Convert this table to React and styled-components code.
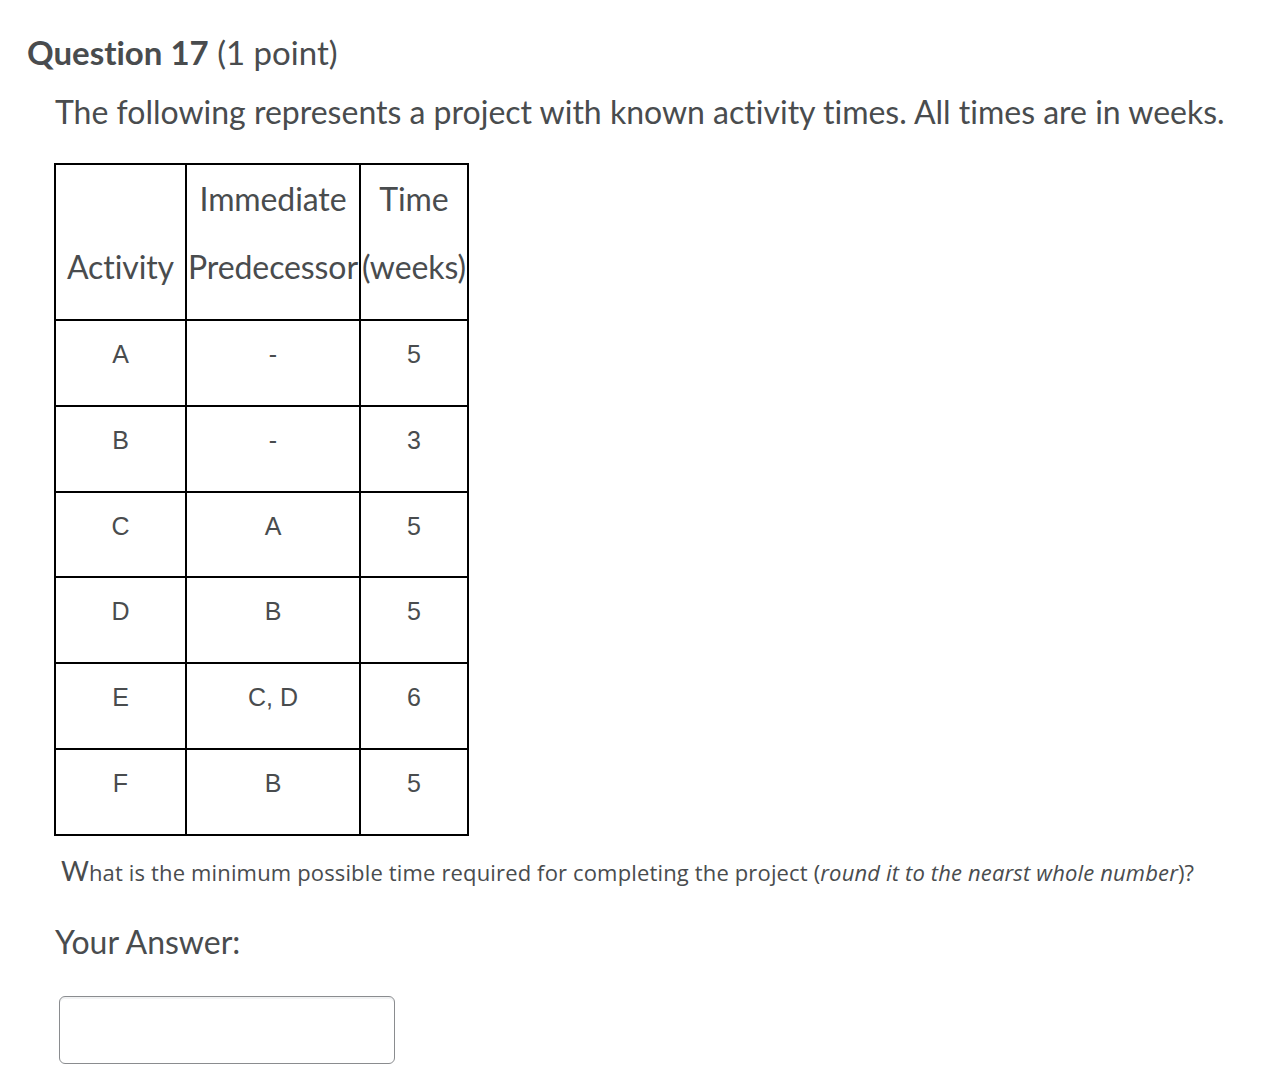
import React from 'react';
import styled, { createGlobalStyle } from 'styled-components';

const GlobalStyle = createGlobalStyle`
  body {
    margin: 0;
    background: #fff;
    font-family: Lato, "Noto Sans", sans-serif;
    font-variant-ligatures: none;
    color: #494c4e;
  }
`;

const Page = styled.div`
  padding: 30px 0 0 27px;
`;

const Title = styled.h2`
  margin: 0;
  font-size: 33px;
  line-height: 44px;
  font-weight: 400;
  b {
    font-weight: 700;
  }
`;

const Body = styled.div`
  padding: 18px 0 0 28px;
`;

const Lead = styled.p`
  margin: 0 0 31px;
  font-size: 32px;
  line-height: 40px;
`;

const Table = styled.table`
  border-collapse: collapse;
  table-layout: fixed;
  margin-left: -1px;
`;

const Head = styled.th`
  width: ${(p) => p.w}px;
  border: 2px solid #000;
  padding: 15px 0 33px;
  font-weight: 400;
  font-size: 32px;
  line-height: 38px;
  text-align: center;
  vertical-align: bottom;
  white-space: nowrap;
  color: #494c4e;
  font-family: Lato, sans-serif;
  letter-spacing: -0.1px;
`;

const HeadLine = styled.div`
  & + & {
    margin-top: 30px;
  }
`;

const Cell = styled.td`
  border: 2px solid #000;
  height: 67.8px;
  padding: 16px 0 0;
  text-align: center;
  vertical-align: top;
  font-family: "Liberation Sans", Arial, sans-serif;
  font-size: 25px;
  line-height: 34px;
  color: #494c4e;
`;

const Prompt = styled.p`
  margin: 20px 0 0 6px;
  font-family: "Open Sans", sans-serif;
  font-size: 22px;
  line-height: 30px;
  color: #494c4e;
  letter-spacing: 0.15px;
`;

const BigW = styled.span`
  font-family: Lato, sans-serif;
  font-size: 27px;
  letter-spacing: 0;
`;

const AnswerLabel = styled.div`
  margin-top: 35px;
  font-size: 32px;
  line-height: 40px;
`;

const AnswerBox = styled.input`
  display: block;
  box-sizing: border-box;
  margin: 34px 0 0 4px;
  width: 336px;
  height: 68px;
  border: 1px solid #8a8c8f;
  border-radius: 6px;
  box-shadow: inset 0 2px 0 0 #f1f2f3;
  background: #fff;
  outline: none;
`;

const rows = [
  ['A', '-', '5'],
  ['B', '-', '3'],
  ['C', 'A', '5'],
  ['D', 'B', '5'],
  ['E', 'C, D', '6'],
  ['F', 'B', '5'],
];

export default function App() {
  return (
    <>
      <GlobalStyle />
      <Page>
        <Title>
          <b>Question 17</b> (1 point)
        </Title>
        <Body>
          <Lead>
            The following represents a project with known activity times. All times are in weeks.
          </Lead>
          <Table>
            <thead>
              <tr>
                <Head w={129}>Activity</Head>
                <Head w={172}>
                  <HeadLine>Immediate</HeadLine>
                  <HeadLine>Predecessor</HeadLine>
                </Head>
                <Head w={106}>
                  <HeadLine>Time</HeadLine>
                  <HeadLine>(weeks)</HeadLine>
                </Head>
              </tr>
            </thead>
            <tbody>
              {rows.map((r) => (
                <tr key={r[0]}>
                  {r.map((c, i) => (
                    <Cell key={i}>{c}</Cell>
                  ))}
                </tr>
              ))}
            </tbody>
          </Table>
          <Prompt>
            <BigW>W</BigW>hat is the minimum possible time required for completing the project (
            <i>round it to the nearst whole number</i>)?
          </Prompt>
          <AnswerLabel>Your Answer:</AnswerLabel>
          <AnswerBox type="text" />
        </Body>
      </Page>
    </>
  );
}
